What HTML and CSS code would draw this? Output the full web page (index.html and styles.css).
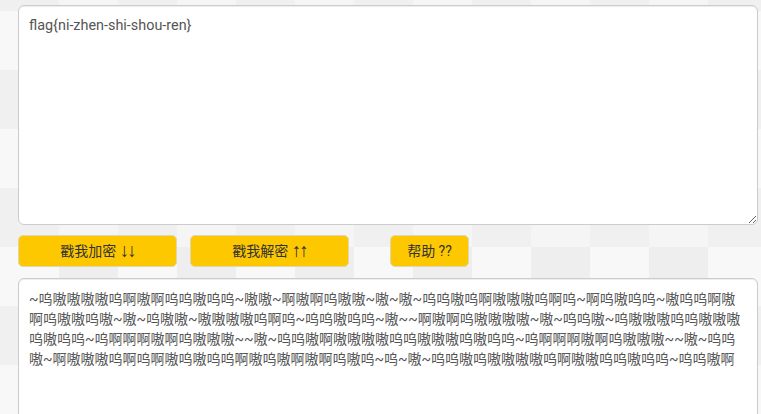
FILE: index.html
```html
<!DOCTYPE html>
<html lang="zh-CN">
<head>
<meta charset="utf-8">
<title>兽音译者</title>
<link rel="stylesheet" href="styles.css">
</head>
<body>
<main class="page">
  <textarea class="box box-top">flag{ni-zhen-shi-shou-ren}</textarea>
  <div class="actions">
    <button class="btn btn-wide" type="button">戳我加密 <span class="arrows">↓↓</span></button>
    <button class="btn btn-wide" type="button">戳我解密 <span class="arrows">↑↑</span></button>
    <button class="btn btn-help" type="button">帮助 ??</button>
  </div>
  <textarea class="box box-bottom">~呜嗷嗷嗷嗷呜啊嗷啊呜呜嗷呜呜~嗷嗷~啊嗷啊呜嗷嗷~嗷~嗷~呜呜嗷呜啊嗷嗷嗷呜啊呜~啊呜嗷呜呜~嗷呜呜啊嗷
啊呜嗷嗷呜嗷~嗷~呜嗷嗷~嗷嗷嗷嗷呜啊呜~呜呜嗷呜呜~嗷~~啊嗷啊呜嗷嗷嗷嗷~嗷~呜呜嗷~呜嗷嗷嗷呜呜嗷嗷嗷
呜嗷呜呜~呜啊啊啊嗷啊呜嗷嗷嗷~~嗷~呜呜嗷啊嗷嗷嗷嗷呜呜嗷嗷嗷呜嗷呜呜~呜啊啊啊嗷啊呜嗷嗷嗷~~嗷~呜呜
嗷~啊嗷嗷嗷呜啊呜啊嗷呜嗷呜呜啊嗷呜嗷啊嗷啊呜嗷呜~呜~嗷~呜呜嗷呜嗷嗷嗷嗷呜啊嗷嗷呜呜嗷呜呜~呜呜嗷啊</textarea>
</main>
</body>
</html>
```

FILE: styles.css
```css
html, body {
  margin: 0;
  padding: 0;
}

body {
  background-color: #f2f2f2;
  background-image: conic-gradient(#f5f5f5 25%, #eeeeee 0 50%, #f8f8f8 0 75%, #f0f0f0 0);
  background-size: 118px 118px;
  background-position: 0 -48px;
  font-family: Roboto, "Noto Sans CJK SC", sans-serif;
  font-size: 14px;
  color: #333;
  overflow: hidden;
}

.page {
  display: flex;
  flex-direction: column;
  padding: 5px 3px 0 18px;
}

.box {
  display: block;
  width: 100%;
  box-sizing: border-box;
  margin: 0;
  padding: 10px;
  border: 1px solid #cccccc;
  border-radius: 6px;
  background: #ffffff;
  box-shadow: inset 0 1px 1px rgba(0, 0, 0, 0.075);
  font-family: Roboto, "Noto Sans CJK SC", sans-serif;
  font-size: 14px;
  line-height: 20px;
  color: #555555;
  white-space: pre;
  overflow: hidden;
  outline: none;
}

.box-top {
  height: 220px;
  font-size: 14.4px;
}

.box-bottom {
  height: 220px;
  margin-top: 11px;
}

.actions {
  display: flex;
  gap: 13px;
  margin-top: 10px;
}

.btn {
  height: 32px;
  box-sizing: border-box;
  margin: 0;
  padding: 0;
  border: 1px solid #e0d6b0;
  border-radius: 5px;
  background: #fdc800;
  color: #333333;
  font-family: Roboto, "Noto Sans CJK SC", sans-serif;
  font-size: 14px;
  line-height: 20px;
  cursor: pointer;
}

.arrows {
  font-family: "Liberation Sans", sans-serif;
  font-size: 19px;
  line-height: 14px;
  letter-spacing: -2px;
  vertical-align: -1px;
}

.btn-wide {
  width: 159px;
}

.btn-help {
  width: 79px;
  margin-left: 28px;
}
```
